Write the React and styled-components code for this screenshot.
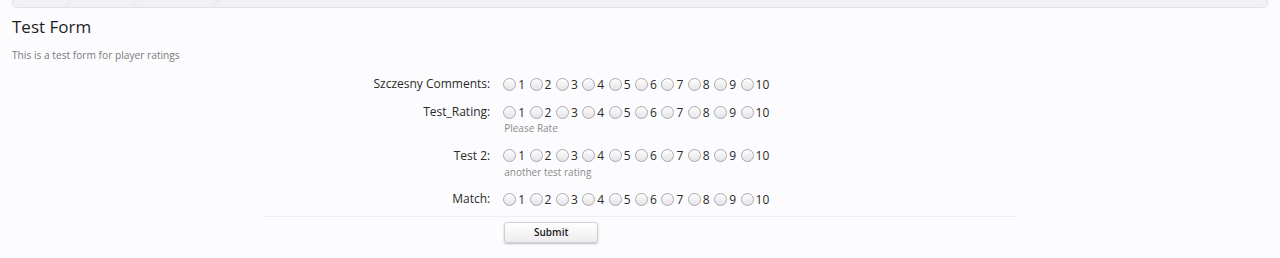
import styled, { createGlobalStyle } from "styled-components";

const GlobalStyle = createGlobalStyle`
  html, body {
    margin: 0;
    padding: 0;
    background: #fcfcfe;
    font-family: "Open Sans", "Liberation Sans", sans-serif;
    color: #222;
  }
`;

const Page = styled.div`
  padding: 0 12px;
  overflow: hidden;
  height: 258px;
`;

const Breadcrumbs = styled.div`
  display: flex;
  height: 24px;
  margin-top: -17px;
  background: #f1f1f5;
  border: 1px solid #e1e1e7;
  border-top: none;
  border-radius: 0 0 5px 5px;
  overflow: hidden;
`;

const Crumb = styled.div`
  width: ${props => props.w}px;
  border-right: 1px solid #e4e4ea;
  transform: skewX(-30deg);
`;

const Title = styled.h1`
  margin: 7px 0 0;
  font-size: 17px;
  font-weight: 400;
  line-height: 24px;
  color: #1e1e1e;
`;

const Description = styled.p`
  margin: 9px 0 0;
  font-size: 10.2px;
  line-height: 14px;
  color: #7a7a7a;
`;

const Form = styled.form`
  width: 60%;
  margin: 13px auto 0;
`;

const Row = styled.div`
  display: flex;
  margin-bottom: 10px;
`;

const Label = styled.div`
  width: 227px;
  padding-right: 10px;
  text-align: right;
  font-size: 12px;
  line-height: 18px;
  color: #2a2a2a;
`;

const Control = styled.div`
  flex: 1;
`;

const Options = styled.div`
  display: flex;
  height: 18px;
  align-items: center;
`;

const Option = styled.label`
  display: flex;
  align-items: center;
  font-size: 12px;
  color: #2a2a2a;
  margin-right: 1.5px;
`;

const Radio = styled.input`
  appearance: none;
  width: 13px;
  height: 13px;
  margin: 0 2px 0 3px;
  border-radius: 50%;
  border: 1px solid #a8a8ae;
  background: linear-gradient(#fdfdfd, #e4e4e8);
  box-shadow: inset 0 1px 1px rgba(255, 255, 255, 0.8);
  box-sizing: border-box;
`;

const Hint = styled.div`
  padding-left: 4px;
  font-size: 10px;
  line-height: 15.5px;
  color: #8a8a8a;
`;

const Divider = styled.div`
  height: 1px;
  background: #eeeef2;
  margin-top: -2px;
`;

const Actions = styled.div`
  padding: 2px 0 0 241px;
`;

const Submit = styled.button`
  width: 94px;
  height: 21px;
  font-family: "Open Sans", "Liberation Sans", sans-serif;
  font-size: 10px;
  font-weight: 600;
  color: #1a1a1a;
  background: linear-gradient(#ffffff, #ececee);
  border: 1px solid #cfcfd4;
  border-radius: 3px;
  box-shadow: 0 1px 2px rgba(0, 0, 0, 0.25);
`;

const fields = [
  { name: "Szczesny Comments" },
  { name: "Test_Rating", hint: "Please Rate" },
  { name: "Test 2", hint: "another test rating" },
  { name: "Match" },
];

const values = [1, 2, 3, 4, 5, 6, 7, 8, 9, 10];

const App = () => (
  <>
    <GlobalStyle />
    <Page>
      <Breadcrumbs>
        <Crumb w={60} />
        <Crumb w={65} />
        <Crumb w={80} />
      </Breadcrumbs>
      <Title>Test Form</Title>
      <Description>This is a test form for player ratings</Description>
      <Form onSubmit={e => e.preventDefault()}>
        {fields.map(field => (
          <Row key={field.name}>
            <Label>{field.name}:</Label>
            <Control>
              <Options>
                {values.map(v => (
                  <Option key={v}>
                    <Radio type="radio" name={field.name} value={v} />
                    {v}
                  </Option>
                ))}
              </Options>
              {field.hint && <Hint>{field.hint}</Hint>}
            </Control>
          </Row>
        ))}
        <Divider />
        <Actions>
          <Submit type="submit">Submit</Submit>
        </Actions>
      </Form>
    </Page>
  </>
);

export default App;
